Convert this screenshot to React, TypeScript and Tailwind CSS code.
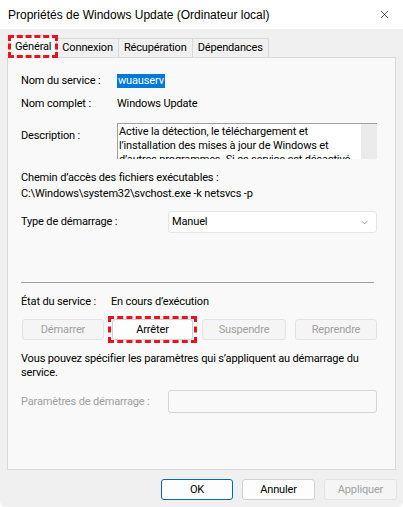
import { X, ChevronDown } from "lucide-react";

const body = { fontFamily: 'Roboto, "Liberation Sans", Arial, sans-serif' };
const titleFont = { fontFamily: '"Liberation Sans", Arial, sans-serif' };

function Tab({ label, active = false }: { label: string; active?: boolean }) {
  if (active) {
    return (
      <div className="relative z-10 -mb-px flex h-[23px] items-center border border-b-0 border-[#d9d9d9] bg-[#f9f9f9] px-[5px]">
        {label}
        <span className="pointer-events-none absolute -inset-x-[2px] -top-[1px] bottom-0 border-[3px] border-dashed border-[#e8131c]" />
      </div>
    );
  }
  return (
    <div className="-ml-px flex h-[19px] items-center border border-b-0 border-[#d9d9d9] bg-[#f0f0f0] px-[5px]">
      {label}
    </div>
  );
}

function ActionButton({
  label,
  disabled = false,
  width,
}: {
  label: string;
  disabled?: boolean;
  width: string;
}) {
  return (
    <div
      className={`flex h-[21px] items-center justify-center rounded-[3px] border ${width} ${
        disabled
          ? "border-[#e3e3e3] bg-[#f5f5f5] text-[#a0a0a0]"
          : "border-[#d0d0d0] bg-[#fdfdfd] text-black"
      }`}
    >
      {label}
    </div>
  );
}

export default function App() {
  return (
    <div
      className="flex h-[507px] w-[403px] flex-col overflow-hidden rounded-b-[6px] bg-[#f0f0f0] text-[11px] leading-[14px] tracking-[-0.15px] text-black"
      style={body}
    >
      <div className="flex h-[29px] shrink-0 items-center justify-between bg-white pl-[8px] pr-[12px] tracking-normal">
        <span className="text-[12px]" style={titleFont}>
          Propriétés de Windows Update (Ordinateur local)
        </span>
        <X className="size-[13px] text-black" strokeWidth={1.2} />
      </div>

      <div className="flex h-[28px] items-end pl-[9px]">
        <Tab label="Général" active />
        <Tab label="Connexion" />
        <Tab label="Récupération" />
        <Tab label="Dépendances" />
      </div>

      <div className="ml-[7px] flex h-[413px] w-[389px] flex-col border border-[#d9d9d9] bg-[#f9f9f9] pl-[13px] pr-[17px]">
        <div className="mt-[16px] flex items-center">
          <span className="w-[96px] shrink-0">Nom du service :</span>
          <span className="bg-[#0078d7] px-px text-white">wuauserv</span>
        </div>

        <div className="mt-[9px] flex items-center">
          <span className="w-[96px] shrink-0">Nom complet :</span>
          <span>Windows Update</span>
        </div>

        <div className="mt-[12px] flex items-start">
          <span className="mt-[6px] w-[96px] shrink-0">Description :</span>
          <div className="flex h-[36px] w-[260px] overflow-hidden border-t border-l border-[#a0a0a0] bg-white">
            <p className="flex-1 whitespace-nowrap pl-[1px] pt-px">
              <span className="block">Active la détection, le téléchargement et</span>
              <span className="block">l’installation des mises à jour de Windows et</span>
              <span className="block">d’autres programmes. Si ce service est désactivé</span>
            </p>
            <div className="w-[16px] shrink-0 bg-[#ebebeb]" />
          </div>
        </div>

        <div className="mt-[11px] leading-[16px]">
          <p>Chemin d’accès des fichiers exécutables :</p>
          <p>C:\Windows\system32\svchost.exe -k netsvcs -p</p>
        </div>

        <div className="mt-[9px] flex items-center">
          <span className="w-[147px] shrink-0">Type de démarrage :</span>
          <div className="flex h-[22px] w-[209px] items-center justify-between rounded-[3px] border border-[#e5e5e5] bg-white pl-[3px] pr-[6px]">
            <span>Manuel</span>
            <ChevronDown className="size-[11px] text-[#666]" strokeWidth={1.3} />
          </div>
        </div>

        <div className="mt-[49px] h-px w-[353px] bg-[#a0a0a0]" />

        <div className="mt-[12px] flex items-center">
          <span className="w-[90px] shrink-0">État du service :</span>
          <span>En cours d’exécution</span>
        </div>

        <div className="mt-[10px] flex items-center">
          <div className="ml-[1px]">
            <ActionButton label="Démarrer" disabled width="w-[82px]" />
          </div>
          <div className="relative ml-[8px]">
            <ActionButton label="Arrêter" width="w-[81px]" />
            <span className="pointer-events-none absolute -inset-x-[4px] -inset-y-[3px] border-[3px] border-dashed border-[#e8131c]" />
          </div>
          <div className="ml-[9px]">
            <ActionButton label="Suspendre" disabled width="w-[84px]" />
          </div>
          <div className="ml-[9px]">
            <ActionButton label="Reprendre" disabled width="w-[82px]" />
          </div>
        </div>

        <p className="mt-[12px]">
          Vous pouvez spécifier les paramètres qui s’appliquent au démarrage du
          <br />
          service.
        </p>

        <div className="mt-[10px] flex items-center">
          <span className="w-[147px] shrink-0 text-[#a0a0a0]">Paramètres de démarrage :</span>
          <div className="h-[23px] w-[209px] rounded-[3px] border border-[#d5d5d5] bg-[#f9f9f9]" />
        </div>
      </div>

      <div className="mt-[9px] flex items-center justify-end gap-[9px] pr-[6px]">
        <div className="flex h-[21px] w-[72px] items-center justify-center rounded-[3px] border border-[#0067c0] bg-[#fdfdfd]">
          OK
        </div>
        <div className="flex h-[21px] w-[73px] items-center justify-center rounded-[3px] border border-[#d0d0d0] bg-[#fdfdfd]">
          Annuler
        </div>
        <div className="flex h-[21px] w-[73px] items-center justify-center rounded-[3px] border border-[#e3e3e3] bg-[#f5f5f5] text-[#a0a0a0]">
          Appliquer
        </div>
      </div>
    </div>
  );
}
